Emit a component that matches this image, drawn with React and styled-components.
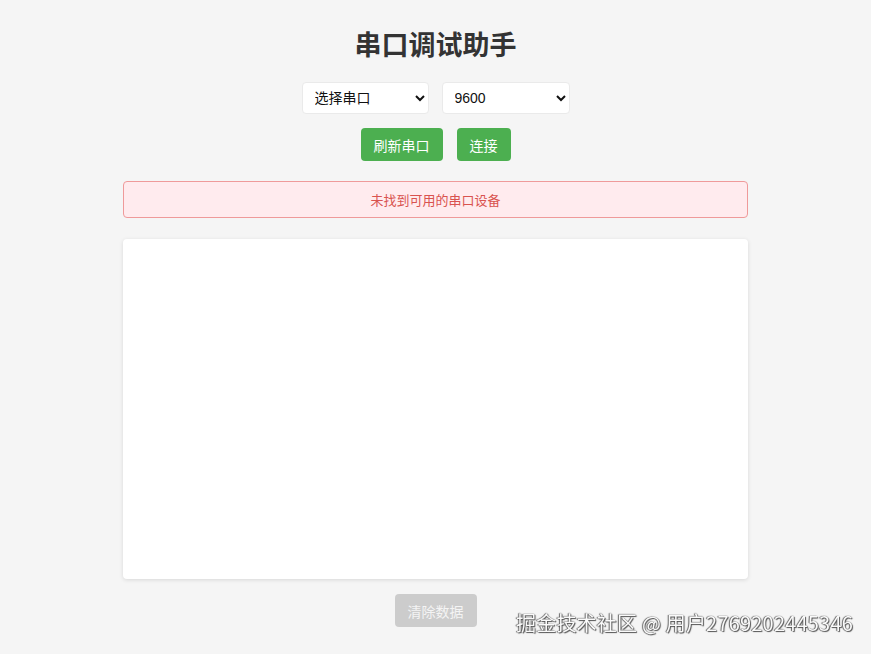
import React from "react";
import styled, { createGlobalStyle } from "styled-components";

const Global = createGlobalStyle`
  html, body { margin: 0; padding: 0; background: #f5f5f5; }
  body { font-family: "Liberation Sans", "Noto Sans CJK SC", sans-serif; color: #333; }
`;

const Page = styled.div`
  display: flex;
  flex-direction: column;
  align-items: center;
  padding-top: 30px;
  min-height: 654px;
  box-sizing: border-box;
`;

const Title = styled.h1`
  margin: 0 0 20px;
  font-size: 27px;
  line-height: 32px;
  font-weight: 700;
  color: #333;
`;

const Row = styled.div`
  display: flex;
  gap: ${(p) => p.$gap || 13}px;
  justify-content: center;
  margin-bottom: ${(p) => p.$mb || 0}px;
`;

const Select = styled.select`
  width: ${(p) => p.$w}px;
  height: 32px;
  padding: 0 6px 0 8px;
  font-size: 14px;
  font-family: "Liberation Sans", "Noto Sans CJK SC", sans-serif;
  color: #111;
  background: #fff;
  border: 1px solid #eaeaea;
  border-radius: 4px;
  box-sizing: border-box;
`;

const Button = styled.button`
  height: 33px;
  padding: 0 13px;
  font-size: 14px;
  font-family: "Noto Sans CJK SC", sans-serif;
  background: ${(p) => (p.$disabled ? "#cccccc" : "#4caf50")};
  color: ${(p) => (p.$disabled ? "#f4f4f4" : "#fff")};
  border: none;
  border-radius: 4px;
  cursor: pointer;
`;

const ErrorBox = styled.div`
  width: 625px;
  height: 37px;
  box-sizing: border-box;
  display: flex;
  align-items: center;
  justify-content: center;
  background: #ffebee;
  border: 1px solid #ef9a9a;
  border-radius: 4px;
  color: #d9534f;
  font-size: 13px;
  font-family: "Noto Sans CJK SC", sans-serif;
  margin-bottom: 21px;
`;

const Output = styled.div`
  width: 625px;
  height: 340px;
  background: #fff;
  border-radius: 4px;
  box-shadow: 0 1px 4px rgba(0, 0, 0, 0.12);
  margin-bottom: 15px;
`;

const Watermark = styled.div`
  position: fixed;
  right: 18px;
  bottom: 17px;
  font-size: 20px;
  font-family: "Noto Sans CJK SC", sans-serif;
  color: #fafafa;
  letter-spacing: 0.2px;
  text-shadow: 0 0 1px #444, 1px 1px 1px #555, -1px 0 1px #666;
  pointer-events: none;
`;

export default function App() {
  return (
    <>
      <Global />
      <Page>
        <Title>串口调试助手</Title>
        <Row $gap={13} $mb={14}>
          <Select $w={127} defaultValue="">
            <option value="">选择串口</option>
          </Select>
          <Select $w={128} defaultValue="9600">
            <option value="9600">9600</option>
            <option value="115200">115200</option>
          </Select>
        </Row>
        <Row $gap={14} $mb={20}>
          <Button>刷新串口</Button>
          <Button>连接</Button>
        </Row>
        <ErrorBox>未找到可用的串口设备</ErrorBox>
        <Output />
        <Button $disabled>清除数据</Button>
      </Page>
      <Watermark>掘金技术社区 @ 用户2769202445346</Watermark>
    </>
  );
}
